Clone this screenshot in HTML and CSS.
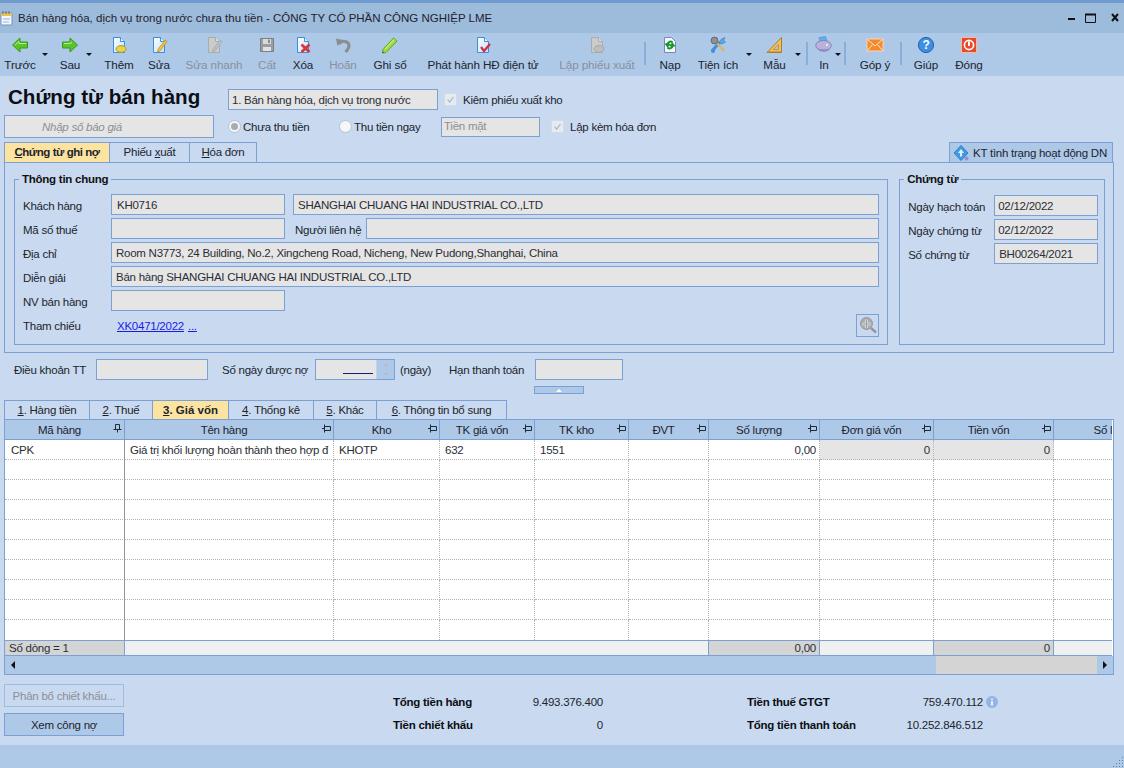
FILE: index.html
```html
<!DOCTYPE html>
<html lang="vi">
<head>
<meta charset="utf-8">
<title>Chứng từ bán hàng</title>
<link rel="stylesheet" href="styles.css">
</head>
<body>
<svg class="defs" width="0" height="0" aria-hidden="true">
  <defs>
    <linearGradient id="docfill" x1="0" y1="0" x2="1" y2="1"><stop offset="0" stop-color="#ffffff"/><stop offset="1" stop-color="#bfe0f8"/></linearGradient>
    <symbol id="doc" viewBox="0 0 18 18"><path d="M3.5 1.5H10.5L14.5 5.5V16.5H3.5Z" fill="url(#docfill)" stroke="#3c8fdc"/><path d="M10.5 1.5V5.5H14.5" fill="#e8f4fc" stroke="#3c8fdc"/></symbol>
    <symbol id="gdoc" viewBox="0 0 18 18"><path d="M3.5 1.5H10.5L14.5 5.5V16.5H3.5Z" fill="#c9cbcd" stroke="#a9abad"/><path d="M10.5 1.5V5.5H14.5" fill="#dfe0e1" stroke="#a9abad"/></symbol>
    <symbol id="pinh" viewBox="0 0 9 9"><path d="M0 4.5H2M2.5 .5V8.5M2.5 2.5H8.5V6.5H2.5" fill="none" stroke="#1d2a3a"/></symbol>
    <symbol id="pinv" viewBox="0 0 9 9"><path d="M4.5 8.5V6M.5 5.5H8.5M2.5 5.5V.5H6.5V5.5" fill="none" stroke="#1d2a3a"/></symbol>
  </defs>
</svg>
<div class="window">
  <header class="titlebar">
    <svg class="app-icon" viewBox="0 0 14 16" width="14" height="16"><path d="M1 3H12V15H1Z" fill="#f4f7fb" stroke="#7d92c8"/><path d="M1 3H12V6H1Z" fill="#e8c34e"/><path d="M3 1V4M6 1V4M9 1V4" stroke="#5a6a9a"/><path d="M3 9H10M3 12H9" stroke="#9db4dc"/></svg>
    <span class="title-text">Bán hàng hóa, dịch vụ trong nước chưa thu tiền - CÔNG TY CỔ PHẦN CÔNG NGHIỆP LME</span>
    <span class="win-controls">
      <svg width="52" height="12" viewBox="0 0 52 12"><path d="M0 7H7" stroke="#111" stroke-width="2"/><path d="M17.5 2.5H27.5V10.5H17.5Z" fill="none" stroke="#111"/><path d="M17 2.5H28" stroke="#111" stroke-width="2"/><path d="M44 2L50 9M50 2L44 9" stroke="#111" stroke-width="2"/></svg>
    </span>
  </header>

  <nav class="toolbar">
    <div class="tool"><svg class="ic" viewBox="0 0 18 18"><path d="M1.5 9L9 2V6H16.5V12H9V16Z" fill="#5cc42a" stroke="#2f9c18"/><path d="M4 9L8 5.5V7.5H15" fill="none" stroke="#b5ee8c"/></svg><span>Trước</span><i class="caret caret-prev"></i></div>
    <div class="tool"><svg class="ic" viewBox="0 0 18 18"><path d="M16.5 9L9 2V6H1.5V12H9V16Z" fill="#5cc42a" stroke="#2f9c18"/><path d="M3 7.5H10V5.5" fill="none" stroke="#b5ee8c"/></svg><span>Sau</span><i class="caret caret-next"></i></div>
    <div class="tool"><svg class="ic" viewBox="0 0 18 18"><use href="#doc"/><ellipse cx="11" cy="13" rx="5" ry="3.4" fill="#e8d44a" stroke="#a89a2a"/></svg><span>Thêm</span></div>
    <div class="tool"><svg class="ic" viewBox="0 0 18 18"><use href="#doc"/><path d="M8 13.5L15 4L17 5.5L10 15L7.5 16Z" fill="#f2c23e" stroke="#b98a1c" stroke-width=".7"/></svg><span>Sửa</span></div>
    <div class="tool off"><svg class="ic" viewBox="0 0 18 18"><use href="#gdoc"/><path d="M8 13.5L15 4L17 5.5L10 15L7.5 16Z" fill="#bdbfc1" stroke="#a5a7a9" stroke-width=".7"/></svg><span>Sửa nhanh</span></div>
    <div class="tool off"><svg class="ic" viewBox="0 0 18 18"><path d="M2.5 2.5H15.5V15.5H2.5Z" fill="#9b9d9f" stroke="#7d7f81"/><path d="M5 3H13V8H5Z" fill="#d9dadb"/><path d="M5 11H13V15H5Z" fill="#e1e2e3"/><path d="M10 3.5H12V7H10Z" fill="#8a8c8e"/></svg><span>Cất</span></div>
    <div class="tool"><svg class="ic" viewBox="0 0 18 18"><use href="#doc"/><path d="M7.5 8.5L15.5 16M15.5 8.5L7.5 16" stroke="#d8343c" stroke-width="2.6"/></svg><span>Xóa</span></div>
    <div class="tool off"><svg class="ic" viewBox="0 0 18 18"><path d="M5 8C8 3.5 15 5 15 10C15 12.5 13.5 14 11.5 16" fill="none" stroke="#8b8d8f" stroke-width="3"/><path d="M2 2.5L9 4L3.5 10Z" fill="#8b8d8f"/></svg><span>Hoãn</span></div>
    <div class="tool"><svg class="ic" viewBox="0 0 18 18"><path d="M2 13.5L12.5 2L16 5L5 16.5L1.5 17Z" fill="#9fdc3c" stroke="#5fa61e"/><path d="M4 13L13 3.5" stroke="#dcf7a8"/><path d="M1.5 17L2 15.5L3 16.5Z" fill="#222"/></svg><span>Ghi sổ</span></div>
    <div class="tool"><svg class="ic" viewBox="0 0 18 18"><use href="#doc"/><path d="M7 11L10 15L16 8" fill="none" stroke="#d62a3c" stroke-width="2.2"/></svg><span>Phát hành HĐ điện tử</span></div>
    <div class="tool off"><svg class="ic" viewBox="0 0 18 18"><use href="#gdoc"/><ellipse cx="11" cy="13" rx="5" ry="3.4" fill="#bcbebf" stroke="#a5a7a9"/></svg><span>Lập phiếu xuất</span></div>
    <i class="sep"></i>
    <div class="tool"><svg class="ic" viewBox="0 0 18 18"><path d="M3.5 1.5H10.5L14.5 5.5V16.5H3.5Z" fill="#f4f6fc" stroke="#7c84c4"/><path d="M11.5 6.5C9.5 4.5 6.5 6 6.5 8.5M4.5 7.5L6.5 10L8.8 8M6.5 11.5C8.5 13.5 11.5 12 11.5 9.5M13.5 10.5L11.5 8L9.2 10" fill="none" stroke="#129a2a" stroke-width="2"/></svg><span>Nạp</span></div>
    <div class="tool"><svg class="ic" viewBox="0 0 18 18"><path d="M3 15L11 6" stroke="#3e8fdc" stroke-width="3"/><path d="M10 7L12 3.5L16 1.5L14.5 4.5L16.5 6L13 8Z" fill="#5fa6e6" stroke="#2f78c0" stroke-width=".6"/><path d="M15 15L7 6" stroke="#d8b46a" stroke-width="2.4"/><circle cx="5.5" cy="4.5" r="3.4" fill="#8e9094" stroke="#66686c"/><circle cx="4" cy="15" r="2" fill="#3e8fdc"/></svg><span>Tiện ích</span><i class="caret caret-tools"></i></div>
    <div class="tool"><svg class="ic" viewBox="0 0 18 18"><path d="M15.5 1.5V16.5H1Z" fill="#ecc064" stroke="#b37e22"/><path d="M12.5 8.5V13.5H7.5Z" fill="#aec9e8" stroke="#b37e22" stroke-width=".7"/><path d="M2 15.5H15" stroke="#d79a38"/></svg><span>Mẫu</span><i class="caret caret-tpl"></i></div>
    <i class="sep"></i>
    <div class="tool"><svg class="ic" viewBox="0 0 18 18"><path d="M4 1.5L10.5 .5L12 5H5Z" fill="#58b4e8" stroke="#3b8ecc" stroke-width=".6"/><ellipse cx="8.5" cy="9.5" rx="7.8" ry="5" fill="#b9b2de" stroke="#8980b8"/><path d="M3 13C5 16 12 16 14.5 13" fill="#9a92c8" stroke="#8980b8"/><circle cx="12" cy="9" r="1" fill="#f4f4fa"/></svg><span>In</span><i class="caret caret-print"></i></div>
    <i class="sep"></i>
    <div class="tool"><svg class="ic" viewBox="0 0 18 18"><path d="M1 3H17V15H1Z" fill="#f58a2c" stroke="#fbd3ae"/><path d="M1.5 3.5L9 10L16.5 3.5M1.5 14.5L6.5 8.5M16.5 14.5L11.5 8.5" fill="none" stroke="#fde6d0"/></svg><span>Góp ý</span></div>
    <i class="sep"></i>
    <div class="tool"><svg class="ic" viewBox="0 0 18 18"><circle cx="9" cy="9" r="7.6" fill="#3f8fe0" stroke="#1c62b4"/><text x="9" y="13.2" class="help-q">?</text></svg><span>Giúp</span></div>
    <div class="tool"><svg class="ic" viewBox="0 0 18 18"><path d="M1.5 1.5H16.5V16.5H1.5Z" fill="#e8492c" stroke="#f8b8a4"/><circle cx="9" cy="9" r="4.6" fill="none" stroke="#fff" stroke-width="1.6"/><path d="M9 5.5V10" stroke="#fff" stroke-width="2"/></svg><span>Đóng</span></div>
  </nav>

  <section class="doc-head">
    <div class="head-row head-row-1">
      <h1 class="doc-title">Chứng từ bán hàng</h1>
      <div class="box combo">1. Bán hàng hóa, dịch vụ trong nước</div>
      <label class="check check-a"><i class="cb"><svg viewBox="0 0 13 13"><path d="M3 6.5L5.5 9.5L10 3.5" fill="none" stroke="#a9b0b8" stroke-width="1.3"/></svg></i>Kiêm phiếu xuất kho</label>
    </div>
    <div class="head-row head-row-2">
      <div class="box quote">Nhập số báo giá</div>
      <label class="radio radio-a"><i class="rd on"></i>Chưa thu tiền</label>
      <label class="radio radio-b"><i class="rd"></i>Thu tiền ngay</label>
      <div class="box cash">Tiền mặt</div>
      <label class="check check-b"><i class="cb"><svg viewBox="0 0 13 13"><path d="M3 6.5L5.5 9.5L10 3.5" fill="none" stroke="#a9b0b8" stroke-width="1.3"/></svg></i>Lập kèm hóa đơn</label>
    </div>
    <div class="tab-row">
      <div class="tabs">
        <div class="tab tab-m active"><u>C</u>hứng từ ghi nợ</div>
        <div class="tab tab-s">Phiếu <u>x</u>uất</div>
        <div class="tab tab-h"><u>H</u>óa đơn</div>
      </div>
      <button class="check-btn"><svg viewBox="0 0 16 16" width="16" height="16"><path d="M8 .5L15 8L8 15.5L1 8Z" fill="#3f9be6" stroke="#2f7cc4"/><path d="M8 4L11 8H9V11.5H7V8H5Z" fill="#dff0fc"/><circle cx="13.5" cy="13.5" r="2" fill="#9a8cd8"/></svg>KT tình trạng hoạt động DN</button>
    </div>
  </section>

  <section class="panel">
    <div class="group group-main">
      <span class="legend">Thông tin chung</span>
      <div class="frow"><label>Khách hàng</label><div class="box w174 pad6">KH0716</div><div class="box grow gap8 pad5">SHANGHAI CHUANG HAI INDUSTRIAL CO.,LTD</div></div>
      <div class="frow"><label>Mã số thuế</label><div class="box w174"></div><label class="contact">Người liên hệ</label><div class="box grow"></div></div>
      <div class="frow"><label>Địa chỉ</label><div class="box grow pad5">Room N3773, 24 Building, No.2, Xingcheng Road, Nicheng, New Pudong,Shanghai, China</div></div>
      <div class="frow"><label>Diễn giải</label><div class="box grow pad5">Bán hàng SHANGHAI CHUANG HAI INDUSTRIAL CO.,LTD</div></div>
      <div class="frow"><label>NV bán hàng</label><div class="box w174"></div></div>
      <div class="frow frow-ref"><label>Tham chiếu</label><a class="link" href="#">XK0471/2022</a><a class="link more" href="#">...</a>
        <button class="zoom-btn"><svg viewBox="0 0 18 18" width="18" height="18"><circle cx="7.5" cy="7.5" r="6" fill="#a9adb1" stroke="#94989c"/><path d="M12 12L17 16.5" stroke="#94989c" stroke-width="2.4"/><path d="M7.5 3.5V12M3 8H12" stroke="#e4e6e8" stroke-width="2.4"/><path d="M7.5 3.5V12M3 8H12" stroke="#8a8e92" stroke-width=".8"/></svg></button>
      </div>
    </div>
    <div class="group group-doc">
      <span class="legend">Chứng từ</span>
      <div class="frow"><label>Ngày hạch toán</label><div class="box grow pad3">02/12/2022</div></div>
      <div class="frow"><label>Ngày chứng từ</label><div class="box grow pad3">02/12/2022</div></div>
      <div class="frow"><label>Số chứng từ</label><div class="box grow pad4">BH00264/2021</div></div>
    </div>
  </section>

  <section class="terms">
    <label>Điều khoản TT</label>
    <div class="box"></div>
    <label class="ind14">Số ngày được nợ</label>
    <div class="box spin"><span class="spin-val"></span><span class="spin-btns"><i class="sp-up"></i><i class="sp-down"></i></span></div>
    <label class="ind5">(ngày)</label>
    <label>Hạn thanh toán</label>
    <div class="box"></div>
  </section>
  <div class="collapse"><i></i></div>

  <div class="tabs grid-tabs">
    <div class="tab gt1"><u>1</u>. Hàng tiền</div>
    <div class="tab gt2"><u>2</u>. Thuế</div>
    <div class="tab gt3 active"><u>3</u>. Giá vốn</div>
    <div class="tab gt4"><u>4</u>. Thống kê</div>
    <div class="tab gt5"><u>5</u>. Khác</div>
    <div class="tab gt6"><u>6</u>. Thông tin bổ sung</div>
  </div>

  <section class="gridbox">
    <div class="grid-clip">
      <table class="grid">
        <colgroup><col class="c1"><col class="c2"><col class="c3"><col class="c4"><col class="c5"><col class="c6"><col class="c7"><col class="c8"><col class="c9"><col class="c10"></colgroup>
        <thead><tr>
          <th>Mã hàng<svg class="pin"><use href="#pinv"/></svg></th>
          <th>Tên hàng<svg class="pin"><use href="#pinh"/></svg></th>
          <th>Kho<svg class="pin"><use href="#pinh"/></svg></th>
          <th>TK giá vốn<svg class="pin"><use href="#pinh"/></svg></th>
          <th>TK kho<svg class="pin"><use href="#pinh"/></svg></th>
          <th>ĐVT<svg class="pin"><use href="#pinh"/></svg></th>
          <th>Số lượng<svg class="pin"><use href="#pinh"/></svg></th>
          <th>Đơn giá vốn<svg class="pin"><use href="#pinh"/></svg></th>
          <th>Tiền vốn<svg class="pin"><use href="#pinh"/></svg></th>
          <th>Số lượng</th>
        </tr></thead>
        <tbody>
          <tr><td>CPK</td><td>Giá trị khối lượng hoàn thành theo hợp đ</td><td>KHOTP</td><td>632</td><td>1551</td><td></td><td class="num">0,00</td><td class="num ro">0</td><td class="num ro">0</td><td></td></tr>
          <tr><td></td><td></td><td></td><td></td><td></td><td></td><td></td><td></td><td></td><td></td></tr>
          <tr><td></td><td></td><td></td><td></td><td></td><td></td><td></td><td></td><td></td><td></td></tr>
          <tr><td></td><td></td><td></td><td></td><td></td><td></td><td></td><td></td><td></td><td></td></tr>
          <tr><td></td><td></td><td></td><td></td><td></td><td></td><td></td><td></td><td></td><td></td></tr>
          <tr><td></td><td></td><td></td><td></td><td></td><td></td><td></td><td></td><td></td><td></td></tr>
          <tr><td></td><td></td><td></td><td></td><td></td><td></td><td></td><td></td><td></td><td></td></tr>
          <tr><td></td><td></td><td></td><td></td><td></td><td></td><td></td><td></td><td></td><td></td></tr>
          <tr><td></td><td></td><td></td><td></td><td></td><td></td><td></td><td></td><td></td><td></td></tr>
          <tr class="last"><td></td><td></td><td></td><td></td><td></td><td></td><td></td><td></td><td></td><td></td></tr>
        </tbody>
        <tfoot><tr>
          <td class="sum">Số dòng = 1</td><td colspan="5"></td><td class="sum num">0,00</td><td></td><td class="sum num">0</td><td></td>
        </tr></tfoot>
      </table>
    </div>
    <div class="hscroll">
      <span class="sb-btn"><i class="tri-l"></i></span>
      <span class="sb-thumb"></span>
      <span class="sb-track"></span>
      <span class="sb-btn sb-btn-r"><i class="tri-r"></i></span>
    </div>
  </section>

  <section class="bottom">
    <div class="btns">
      <button class="btn disabled">Phân bổ chiết khấu...</button>
      <button class="btn">Xem công nợ</button>
    </div>
    <div class="totals">
      <b>Tổng tiền hàng</b><span class="val">9.493.376.400</span><b class="lab2">Tiền thuế GTGT</b><span class="val">759.470.112<svg class="info" viewBox="0 0 12 12" width="12" height="12"><circle cx="6" cy="6" r="6" fill="#95b3e4"/><path d="M6 2.5V4M6 5V9.5" stroke="#fff" stroke-width="1.6"/></svg></span>
      <b>Tiền chiết khấu</b><span class="val">0</span><b class="lab2">Tổng tiền thanh toán</b><span class="val">10.252.846.512</span>
    </div>
  </section>

  <footer class="statusbar">
    <svg class="grip" viewBox="0 0 12 12" width="12" height="12"><path d="M10 1h1v1h-1zM7 4h1v1H7zM10 4h1v1h-1zM4 7h1v1H4zM7 7h1v1H7zM10 7h1v1h-1zM1 10h1v1H1zM4 10h1v1H4zM7 10h1v1H7zM10 10h1v1h-1z" fill="#5d7fa8"/></svg>
  </footer>
</div>
</body>
</html>
```
FILE: styles.css
```css
* { box-sizing: border-box; }
html, body { margin: 0; padding: 0; }
body {
  width: 1124px;
  height: 768px;
  overflow: hidden;
  font: 11.5px/14px "Liberation Sans", Arial, sans-serif;
  letter-spacing: -.25px;
  color: #20242c;
  background: #c9daf0;
}
.defs { position: absolute; }
.window { width: 1124px; height: 768px; display: flex; flex-direction: column; background: #c9daf0; border-top: 3px solid #6f9bd1; }

/* title bar */
.titlebar { height: 30px; flex: none; display: flex; align-items: center; background: #9dbbdb; position: relative; letter-spacing: 0; }
.app-icon { margin: 0 4px 0 0; flex: none; }
.title-text { color: #1d2230; }
.win-controls { margin-left: auto; margin-right: 4px; display: flex; }
.win-controls svg { display: block; }

/* toolbar */
.toolbar {
  height: 43px; flex: none; background: #aec9e8; display: grid;
  grid-template-columns: 40px 60px 38px 42px 68px 38px 34px 46px 48px 138px 90px 6px 44px 52px 61px 3px 32px 10px 50px 2px 48px 38px;
  align-items: start;
  font-size: 11.7px;
  letter-spacing: -.1px;
}
.tool { position: relative; height: 43px; display: flex; flex-direction: column; align-items: center; padding-top: 3px; white-space: nowrap; }
.tool span { margin-top: 4px; line-height: 14px; }
.tool.off span { color: #8a9099; }
.ic { width: 18px; height: 18px; display: block; flex: none; overflow: visible; }
.help-q { font: bold 12px "Liberation Sans", sans-serif; fill: #fff; text-anchor: middle; }
.caret { position: absolute; top: 20px; width: 0; height: 0; border: 3px solid transparent; border-top: 3px solid #111; border-bottom: 0; }
.caret-prev { left: 42px; }
.caret-next { left: 46px; }
.caret-tools { left: 54px; }
.caret-tpl { left: 51px; }
.caret-print { left: 27px; }
.sep { display: block; width: 2px; height: 23px; margin: 9px auto 0; background: #8aaed8; }

/* doc head */
.doc-head { flex: none; height: 86px; padding-top: 13px; }
.head-row { display: flex; align-items: center; }
.head-row-1 { height: 21px; padding-left: 8px; }
.doc-title { width: 220px; margin: 0 0 5px; font: bold 20.6px/24px "Liberation Sans", Arial, sans-serif; letter-spacing: 0; color: #0c0e14; white-space: nowrap; }
.box { background: #e5e5e5; border: 1px solid #7ba1d4; height: 21px; line-height: 20px; white-space: nowrap; overflow: hidden; color: #2a2e36; }
.combo { width: 210px; padding-left: 3px; }
.check, .radio { display: flex; align-items: center; white-space: nowrap; }
.check-a { margin-left: 6px; }
.cb { width: 13px; height: 13px; background: #e6ebf2; border: 1px solid #d2dbe8; margin-right: 6px; display: block; }
.cb svg { display: block; width: 11px; height: 11px; }
.head-row-2 { height: 23px; margin-top: 5px; padding-left: 4px; }
.quote { width: 210px; height: 23px; line-height: 22px; font-style: italic; color: #8b8f96; padding-left: 37px; }
.radio-a { margin-left: 14px; width: 111px; }
.radio-b { width: 102px; }
.rd { width: 13px; height: 13px; border-radius: 50%; background: #f4f6f9; border: 1px solid #b6c2d2; margin-right: 2px; display: block; position: relative; }
.rd.on::after { content: ""; position: absolute; left: 2px; top: 2px; width: 7px; height: 7px; border-radius: 50%; background: #a8acb2; }
.cash { width: 99px; height: 20px; line-height: 17px; padding-left: 2px; color: #8b8f96; }
.check-b { margin-left: 11px; }
.tab-row { display: flex; justify-content: space-between; align-items: flex-end; margin-top: 4px; padding: 0 11px 0 4px; height: 20px; }
.tabs { display: flex; }
.tab { height: 20px; line-height: 18px; border: 1px solid #7ba1d4; border-bottom: 0; border-left-width: 0; text-align: center; white-space: nowrap; background: #c9daf0; }
.tab:first-child { border-left-width: 1px; }
.tab.active { background: #fde3a0; font-weight: bold; letter-spacing: 0; }
.tab-m.active { letter-spacing: -.45px; }
.tab u { text-underline-offset: 1px; }
.tab-m { width: 106px; }
.tab-s { width: 80px; }
.tab-h { width: 67px; }
.check-btn { width: 164px; height: 20px; padding: 0 0 0 3px; background: #aec9e8; border: 1px solid #7ba1d4; border-bottom: 0; display: flex; align-items: center; gap: 4px; font: inherit; letter-spacing: inherit; color: #1d2230; white-space: nowrap; }
.check-btn svg { flex: none; }

/* panel */
.panel { flex: none; height: 191px; margin: 0 10px 0 4px; border: 1px solid #7ba1d4; display: flex; gap: 11px; padding: 16px 8px 7px 9px; }
.group { position: relative; border: 1px solid #7ba1d4; display: flex; flex-direction: column; gap: 3px; padding-top: 14px; padding-left: 8px; }
.group-main { width: 875px; padding-right: 8px; }
.group-doc { width: 206px; padding-top: 15px; padding-right: 6px; }
.legend { position: absolute; left: 4px; top: -8px; padding: 0 3px; background: #c9daf0; font-weight: bold; line-height: 14px; color: #111; }
.frow { display: flex; align-items: center; height: 21px; }
.frow label { flex: none; width: 88px; padding-top: 2px; white-space: nowrap; }
.frow-ref label { padding-top: 0; }
.group-doc .frow label { width: 86px; }
.frow label.contact { width: 73px; margin-left: 8px; padding-left: 2px; }
.w174 { width: 174px; flex: none; }
.grow { flex: 1; min-width: 0; }
.gap8 { margin-left: 8px; }
.pad6 { padding-left: 5px; }
.pad5 { padding-left: 4px; }
.pad4 { padding-left: 4px; }
.pad3 { padding-left: 3px; }
.frow-ref { height: 23px; }
.link { color: #1a1ae6; text-decoration: underline; margin-left: 6px; }
.link.more { margin-left: 4px; }
.zoom-btn { margin-left: auto; width: 23px; height: 23px; padding: 1px 0 0 2px; background: #c9daf0; border: 1px solid #7ba1d4; display: flex; }

/* terms */
.terms { flex: none; margin-top: 6px; height: 21px; padding-left: 14px; display: grid; grid-template-columns: 82px 112px 107px 80px 54px 86px 88px; align-items: center; white-space: nowrap; }
.ind14 { padding-left: 14px; }
.ind5 { padding-left: 5px; }
.spin { display: flex; justify-content: flex-end; }
.spin-val { width: 30px; height: 14px; margin-right: 3px; border-bottom: 1px solid #16187a; }
.spin-btns { width: 18px; height: 19px; background: #aec9e8; display: flex; flex-direction: column; align-items: center; justify-content: space-around; border-left: 1px solid #c3d4ea; }
.sp-up, .sp-down { width: 0; height: 0; border: 2px solid transparent; display: block; }
.sp-up { border-bottom: 2px solid #d2a6b0; border-top: 0; }
.sp-down { border-top: 2px solid #d2a6b0; border-bottom: 0; }
.collapse { flex: none; width: 50px; height: 8px; margin: 6px 0 0 534px; background: #aec9e8; border: 1px solid #7ba1d4; display: flex; align-items: center; justify-content: center; }
.collapse i { width: 0; height: 0; border: 3px solid transparent; border-bottom: 3px solid #fff; border-top: 0; display: block; }

/* grid tabs */
.grid-tabs { flex: none; margin: 6px 0 0 4px; height: 19px; }
.grid-tabs .tab { height: 19px; }
.gt1 { width: 86px; }
.gt2 { width: 63px; }
.gt3 { width: 76px; }
.gt4 { width: 85px; }
.gt5 { width: 63px; }
.gt6 { width: 130px; }

/* grid */
.gridbox { flex: none; margin: 0 10px 0 4px; border: 1px solid #7ba1d4; background: #fff; }
.grid-clip { overflow: hidden; width: 1107px; }
.grid { border-collapse: separate; border-spacing: 0; table-layout: fixed; width: 1185px; }
.c1 { width: 120px; } .c2 { width: 209px; } .c3 { width: 106px; } .c4 { width: 95px; } .c5 { width: 94px; }
.c6 { width: 80px; } .c7 { width: 111px; } .c8 { width: 114px; } .c9 { width: 120px; } .c10 { width: 136px; }
.grid th { position: relative; height: 20px; padding: 0 10px 0 0; font-weight: normal; background: #aec9e8; border-right: 1px solid #7ba1d4; border-bottom: 1px solid #7ba1d4; white-space: nowrap; overflow: hidden; color: #1d2230; }
.pin { position: absolute; right: 2px; top: 4px; width: 9px; height: 9px; }
.grid td { height: 20px; padding: 0 5px; border-right: 1px dotted #b4b4b4; border-bottom: 1px dotted #b4b4b4; white-space: nowrap; overflow: hidden; color: #2a2e36; }
.grid tbody td:first-child { border-right: 1px solid #8e949c; padding-left: 6px; }
.grid tr.last td { border-bottom: 0; }
.grid td.num { text-align: right; padding-right: 3px; }
.grid td.ro { background: #e5e5e5; }
.grid tfoot td { height: 16px; padding: 0 3px 0 4px; background: #f0f0f0; border-top: 1px solid #7ba1d4; border-bottom: 1px solid #7ba1d4; border-right: 1px solid #7ba1d4; }
.grid tfoot td.sum { background: #d4d4d4; }
.hscroll { height: 18px; display: flex; background: #aec9e8; }
.sb-btn { width: 16px; display: flex; align-items: center; justify-content: center; flex: none; }
.sb-thumb { width: 915px; flex: none; }
.sb-track { flex: 1; background: #d4d4d4; }
.tri-l, .tri-r { width: 0; height: 0; border: 4px solid transparent; display: block; }
.tri-l { border-right: 4px solid #111; border-left: 0; }
.tri-r { border-left: 4px solid #111; border-right: 0; }

/* bottom */
.bottom { flex: none; height: 70px; padding: 9px 0 0 4px; display: flex; }
.btns { width: 120px; display: flex; flex-direction: column; gap: 6px; flex: none; }
.btn { height: 23px; padding: 0; background: #aec9e8; border: 1px solid #7ba1d4; font: inherit; letter-spacing: inherit; color: #20242c; }
.btn.disabled { background: #c9daf0; border-color: #9cbce2; color: #8b8f96; }
.totals { margin: 6px 0 0 269px; display: grid; grid-template-columns: 110px 100px 144px 110px 126px; grid-template-rows: 23px 23px; align-items: center; white-space: nowrap; }
.totals b { color: #0c0e14; }
.totals .lab2 { grid-column: 4; }
.totals .val { text-align: right; position: relative; }
.info { position: absolute; left: 100%; top: 1px; margin-left: 3px; }
.statusbar { flex: 1; background: #aec9e8; position: relative; }
.grip { position: absolute; right: 0; bottom: 0; }
```
